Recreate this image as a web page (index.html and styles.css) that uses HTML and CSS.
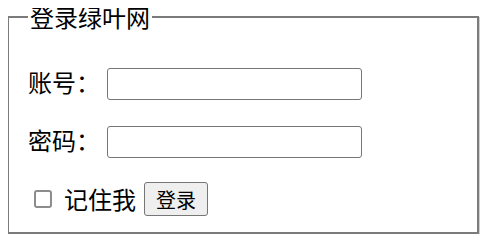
FILE: index.html
```html
<!DOCTYPE html>
<html lang="zh-CN">
<head>
    <meta charset="UTF-8">
    <title>登录绿叶网</title>
<link rel="stylesheet" href="styles.css">
</head>
<body>

    <form class="login-form">
        <fieldset class="login-box">
            <legend>登录绿叶网</legend>
            <div class="form-body">
                <div class="field">
                    <label for="account">账号：</label>
                    <input type="text" id="account" class="text-input">
                </div>
                <div class="field">
                    <label for="password">密码：</label>
                    <input type="password" id="password" class="text-input">
                </div>
                <div class="remember">
                    <input type="checkbox" id="remember" class="check">
                    <label for="remember">记住我</label>
                    <button type="submit" class="submit-btn">登录</button>
                </div>
            </div>
        </fieldset>
    </form>

</body>
</html>
```

FILE: styles.css
```css
    /* Base */
    body {
        margin: 8px;
        background: #fff;
        color: #000;
        font-family: "Noto Sans CJK SC", "Noto Sans", sans-serif;
        font-size: 24px;
    }

    .login-form {
        margin: 0;
    }

    /* Fieldset box */
    .login-box {
        margin: 0 3px 0 -1px;
        padding: 42px 18px 16px 19px;
        border: 2px solid #7b7b7b;
        box-shadow: 1px 1px 0 #d0d0d0;
        min-width: 0;
    }

    .login-box legend {
        padding: 0 2px;
        line-height: 18px;
        font-size: 24px;
    }

    .form-body {
        display: flex;
        flex-direction: column;
    }

    /* Rows */
    .field {
        display: flex;
        align-items: center;
        height: 32px;
    }

    .field + .field {
        margin-top: 26px;
    }

    .field label {
        margin-bottom: 5px;
    }

    .text-input {
        box-sizing: border-box;
        width: 255px;
        height: 32px;
        margin: 0 0 0 7px;
        padding: 1px 3px;
        border: 1px solid #767676;
        border-radius: 3px;
        font-size: 20px;
        background: #fff;
    }

    .remember {
        display: flex;
        align-items: center;
        height: 34px;
        margin-top: 24px;
    }

    .check {
        appearance: none;
        box-sizing: border-box;
        width: 18px;
        height: 18px;
        margin: 0 12px 0 6px;
        border: 2px solid #8c8c8c;
        border-radius: 3px;
        background: #fff;
    }

    .remember label {
        margin-bottom: 2px;
    }

    .submit-btn {
        box-sizing: border-box;
        width: 64px;
        height: 34px;
        margin-left: 8px;
        padding: 0;
        border: 1px solid #767676;
        border-radius: 3px;
        background: #efefef;
        color: #000;
        font-family: "Noto Sans CJK SC", "Noto Sans", sans-serif;
        font-size: 20px;
    }
```
